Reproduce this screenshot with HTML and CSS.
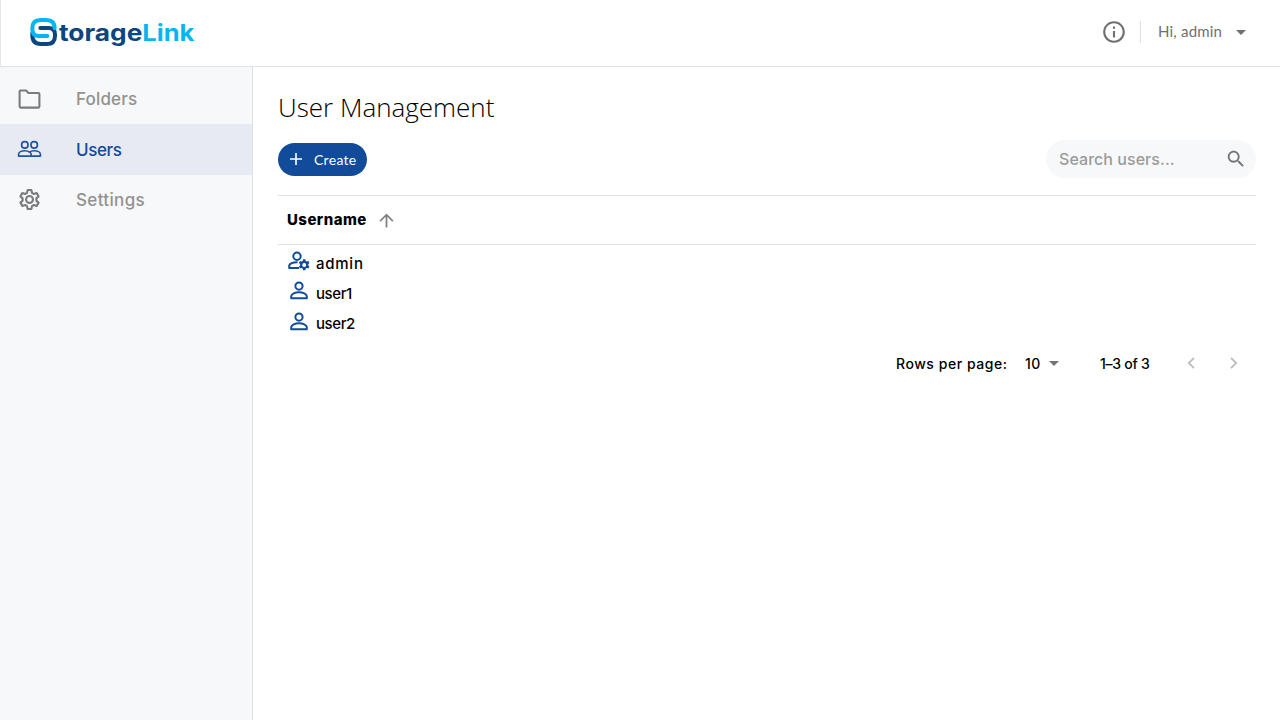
FILE: index.html
```
<!DOCTYPE html>
<html lang="en">
<head>
    <meta charset="UTF-8">
    <meta name="viewport" content="width=device-width, initial-scale=1.0">
    <title>StorageLink - User Management</title>
    <link rel="stylesheet" href="styles.css">
</head>
<body>
    <header class="topbar">
        <svg class="logo" viewBox="90 50 495 90" role="img" aria-label="StorageLink">
            <path class="logo-dark" d="M97 98v6q0 27 25 27h18q25 0 25-25v-3q0-20-19-20h-25"/>
            <path class="logo-light" d="M164 84q0-25-25-25h-17q-25 0-25 25v3q0 20 19 20h26"/>
            <text class="logo-text dark" x="177" y="123" textLength="250" lengthAdjust="spacingAndGlyphs">torage</text>
            <text class="logo-text light" x="427" y="123" textLength="156" lengthAdjust="spacingAndGlyphs">Link</text>
        </svg>
        <div class="account">
            <svg class="info" viewBox="0 0 24 24"><path d="M11 7h2v2h-2zm0 4h2v6h-2zm1-9C6.480 2 2 6.480 2 12s4.480 10 10 10 10-4.480 10-10S17.520 2 12 2zm0 18c-4.410 0-8-3.590-8-8s3.590-8 8-8 8 3.590 8 8-3.590 8-8 8z"/></svg>
            <span class="divider"></span>
            <span class="greeting">Hi, admin</span>
            <svg class="caret" viewBox="0 0 10 5"><path d="M0 0h10L5 5z"/></svg>
        </div>
    </header>

    <div class="layout">
        <nav class="sidebar">
            <a class="nav-item">
                <svg class="nav-icon" viewBox="0 0 24 24"><path class="line" d="M2.500 4.400q0-1 1-1h5.300l2.200 2.300h9.500q1 0 1 1v12.100q0 1-1 1h-17q-1 0-1-1z"/></svg>
                <span>Folders</span>
            </a>
            <a class="nav-item active">
                <svg class="nav-icon" viewBox="0 0 24 24">
                    <circle class="line thin" cx="7.500" cy="7.600" r="3.100"/>
                    <circle class="line thin" cx="16.500" cy="7.600" r="3.100"/>
                    <path class="line thin" d="M1.500 18.300v-1.600c0-2.200 3-3.500 6-3.500 1.900 0 3.400.5 4.500 1.300 1.100-.8 2.600-1.300 4.500-1.300 3 0 6 1.300 6 3.500v1.600zM12 14.500c1 .6 1.600 1.300 1.600 2.200v1.600"/>
                </svg>
                <span>Users</span>
            </a>
            <a class="nav-item nav-settings">
                <svg class="nav-icon" viewBox="0 0 24 24">
                    <path class="line" d="M10.200 2.900h3.600l.6 2.800 1.800 1 2.700-.9 1.800 3.200-2.100 1.900v2.200l2.100 1.900-1.800 3.200-2.700-.9-1.800 1-.6 2.800h-3.600l-.6-2.800-1.800-1-2.700.9L3.300 15l2.100-1.900v-2.200L3.300 9l1.800-3.200 2.700.9 1.800-1z"/>
                    <circle class="line" cx="12" cy="12" r="3.300"/>
                </svg>
                <span>Settings</span>
            </a>
        </nav>

        <main class="content">
            <h1>User Management</h1>
            <div class="toolbar">
                <button class="create">
                    <svg class="plus" viewBox="0 0 12 12"><path d="M6 0v12M0 6h12"/></svg>
                    <span>Create</span>
                </button>
                <label class="search">
                    <input type="text" placeholder="Search users...">
                    <svg viewBox="0 0 24 24"><path d="M15.500 14h-.79l-.28-.27C15.410 12.590 16 11.110 16 9.500 16 5.910 13.090 3 9.500 3S3 5.910 3 9.500 5.910 16 9.500 16c1.610 0 3.090-.59 4.230-1.570l.27.28v.79l5 4.990L20.490 19l-4.990-5zm-6 0C7.010 14 5 11.990 5 9.500S7.010 5 9.500 5 14 7.010 14 9.500 11.990 14 9.500 14z"/></svg>
                </label>
            </div>

            <div class="table-head">
                <span>Username</span>
                <svg class="sort" viewBox="0 0 24 24"><path d="M4 12l1.410 1.410L11 7.830V20h2V7.830l5.580 5.590L20 12l-8-8-8 8z"/></svg>
            </div>
            <ul class="users">
                <li class="admin">
                    <svg viewBox="0 0 24 24">
                        <circle class="line" cx="10" cy="7.200" r="3.700"/>
                        <path class="line" d="M12 19H2.200v-2c0-2.600 4-3.900 8.300-3.800"/>
                        <path fill-rule="evenodd" d="M16.100 10.300h2.200l.4 1.700 1.100.6 1.600-.5 1.100 1.900-1.200 1.100v1.400l1.200 1.100-1.100 1.900-1.600-.5-1.100.6-.4 1.700h-2.200l-.4-1.700-1.100-.6-1.600.5-1.100-1.900 1.200-1.100v-1.400l-1.200-1.100 1.100-1.900 1.600.5 1.100-.6zM17.200 13.900a2 2 0 1 0 0 4 2 2 0 0 0 0-4z"/>
                    </svg>
                    <span>admin</span>
                </li>
                <li>
                    <svg viewBox="0 0 24 24"><circle class="line" cx="12" cy="7.100" r="3.600"/><path class="line" d="M4.200 19.300v-2c0-2.600 4-4 7.800-4s7.800 1.400 7.800 4v2z"/></svg>
                    <span>user1</span>
                </li>
                <li>
                    <svg viewBox="0 0 24 24"><circle class="line" cx="12" cy="7.100" r="3.600"/><path class="line" d="M4.200 19.300v-2c0-2.600 4-4 7.800-4s7.800 1.400 7.800 4v2z"/></svg>
                    <span>user2</span>
                </li>
            </ul>

            <footer class="pagination">
                <span class="rows-label">Rows per page:</span>
                <span class="rows-value">10</span>
                <svg class="caret" viewBox="0 0 10 5"><path d="M0 0h10L5 5z"/></svg>
                <span class="range">1–3 of 3</span>
                <svg class="arrow" viewBox="0 0 8 12"><path d="M7 .8L1.800 6 7 11.200"/></svg>
                <svg class="arrow" viewBox="0 0 8 12"><path d="M1 .8L6.200 6 1 11.200"/></svg>
            </footer>
        </main>
    </div>
</body>
</html>
```
FILE: styles.css
```
* {
    box-sizing: border-box;
}

body {
    margin: 0;
    height: 100vh;
    display: flex;
    flex-direction: column;
    overflow: hidden;
    background-color: #fff;
    color: #000;
    font-family: Inter, "Liberation Sans", sans-serif;
}

svg {
    display: block;
    flex: none;
    fill: currentColor;
}

.line {
    fill: none;
    stroke: currentColor;
    stroke-width: 2;
    stroke-linejoin: round;
}

.line.thin {
    stroke-width: 1.6;
}

.topbar {
    height: 67px;
    flex: none;
    display: flex;
    align-items: center;
    justify-content: space-between;
    padding: 0 34px 2px 29px;
    border-left: 1px solid #e6e7e9;
    border-bottom: 1px solid #e2e3e5;
}

.logo {
    width: 165px;
    height: 30px;
}

.logo path {
    fill: none;
    stroke-width: 12;
    stroke-linecap: round;
}

.logo-dark {
    stroke: #0c4680;
}

.logo-light {
    stroke: #06b5f3;
}

.logo-text {
    font-size: 69px;
    font-weight: 700;
}

.logo-text.dark {
    fill: #0c4680;
}

.logo-text.light {
    fill: #06b5f3;
}

.account {
    display: flex;
    align-items: center;
    color: #707070;
}

.info {
    width: 26px;
    height: 26px;
}

.divider {
    width: 1px;
    height: 22px;
    margin: 0 17px 0 13px;
    background-color: #e0e0e0;
}

.greeting {
    width: 65px;
    padding-bottom: 2px;
    font-family: Lato, sans-serif;
    font-size: 15px;
    letter-spacing: 0.2px;
    white-space: nowrap;
}

.caret {
    width: 10px;
    height: 5px;
}

.account .caret {
    margin-left: 13px;
}

.layout {
    flex: 1;
    display: flex;
}

.sidebar {
    width: 253px;
    flex: none;
    padding-top: 7px;
    background-color: #f7f8fa;
    border-right: 1px solid #e0e1e4;
}

.nav-item {
    height: 50.4px;
    display: flex;
    align-items: center;
    gap: 34px;
    padding-left: 17px;
    color: #929292;
    font-size: 17px;
    font-weight: 500;
    letter-spacing: 0.15px;
}

.nav-icon {
    width: 25px;
    height: 25px;
    color: #7b7b7b;
}

.nav-item.active {
    background-color: #e7eaf2;
    color: #134b9b;
    letter-spacing: -0.4px;
}

.nav-settings {
    letter-spacing: 0.35px;
}

.active .nav-icon {
    color: #1c55a5;
}

.content {
    flex: 1;
    padding: 24px 24px 0 25px;
}

h1 {
    margin: 0;
    font-family: "Open Sans", sans-serif;
    font-size: 26px;
    font-weight: 300;
    line-height: 32px;
}

.toolbar {
    display: flex;
    align-items: center;
    justify-content: space-between;
    margin-top: 17px;
    height: 38px;
}

.create {
    width: 89px;
    height: 33px;
    display: flex;
    align-items: center;
    gap: 12px;
    padding: 0 0 0 12px;
    border: none;
    border-radius: 17px;
    background-color: #134b9b;
    color: #fff;
    font-family: Lato, sans-serif;
    font-size: 14px;
    letter-spacing: 0.3px;
}

.plus {
    width: 12px;
    height: 12px;
    stroke: #fff;
    stroke-width: 1.6;
}

.search {
    width: 210px;
    height: 38px;
    display: flex;
    align-items: center;
    justify-content: space-between;
    padding: 0 9px 0 13px;
    border-radius: 19px;
    background-color: #f7f8fa;
}

.search input {
    width: 140px;
    padding: 0;
    border: none;
    background: none;
    font: 500 16px Inter, sans-serif;
    letter-spacing: 0.05px;
}

.search input::placeholder {
    color: #9b9b9b;
}

.search svg {
    width: 22px;
    height: 22px;
    color: #757575;
}

.table-head {
    height: 50px;
    display: flex;
    align-items: center;
    gap: 9px;
    margin-top: 17px;
    padding: 0 0 2px 9px;
    border-top: 1px solid #e0e0e0;
    border-bottom: 1px solid #e0e0e0;
    font-size: 15px;
    font-weight: 800;
    letter-spacing: 0.45px;
}

.sort {
    width: 21px;
    height: 21px;
    margin-top: 2px;
    color: #808080;
}

.users {
    margin: 0;
    padding: 3px 0 0 9px;
    list-style: none;
}

.users li {
    height: 30.3px;
    display: flex;
    align-items: center;
    gap: 5px;
    font-size: 15px;
    font-weight: 500;
    letter-spacing: -0.4px;
}

.users .admin {
    letter-spacing: 0.75px;
}

.users svg {
    width: 24px;
    height: 24px;
    margin-bottom: 4px;
    color: #134b9b;
}

.pagination {
    display: flex;
    align-items: center;
    justify-content: flex-end;
    height: 20px;
    margin-top: 15px;
    padding-right: 18px;
    font-size: 14px;
    font-weight: 500;
    white-space: nowrap;
}

.rows-label {
    width: 112px;
    letter-spacing: 0.55px;
}

.rows-value {
    width: 17px;
    margin-left: 17px;
    letter-spacing: 0.4px;
}

.pagination .caret {
    margin-left: 7px;
    color: #757575;
}

.range {
    width: 50px;
    margin-left: 41px;
    letter-spacing: -0.25px;
}

.arrow {
    width: 8px;
    height: 12px;
    margin-left: 35px;
    margin-bottom: 1px;
    fill: none;
    stroke: #bdbdbd;
    stroke-width: 1.8;
}

.range + .arrow {
    margin-left: 37px;
}
```
